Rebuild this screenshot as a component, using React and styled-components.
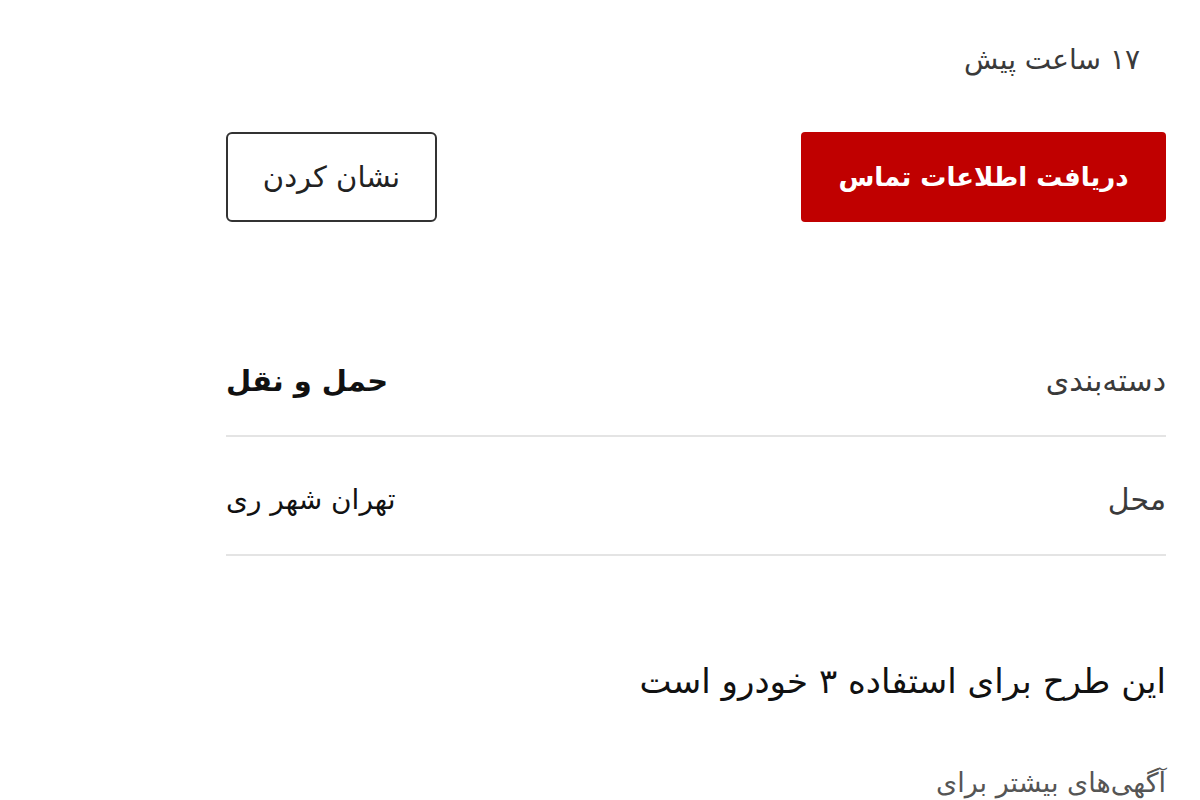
import React from 'react'
import styled, { createGlobalStyle } from 'styled-components'

const GlobalStyle = createGlobalStyle`
  html, body {
    margin: 0;
    padding: 0;
    background: #fff;
  }
  body {
    font-family: "DejaVu Sans", "Noto Sans", sans-serif;
    direction: rtl;
  }
`

const Page = styled.div`
  padding: 40px 34px 0 226px;
  height: 800px;
  box-sizing: border-box;
  overflow: hidden;
`

const TimeAgo = styled.div`
  font-size: 28px;
  line-height: 40px;
  color: #3a3a3a;
  padding-right: 26px;
  margin-bottom: 52px;
`

const Actions = styled.div`
  display: flex;
  justify-content: space-between;
  align-items: stretch;
  height: 90px;
  margin-bottom: 96px;
`

const Button = styled.button`
  font-family: inherit;
  font-size: ${p => (p.$primary ? '26px' : '29px')};
  height: 90px;
  border-radius: ${p => (p.$primary ? '4px' : '6px')};
  cursor: pointer;
  width: ${p => (p.$primary ? '365px' : '211px')};
  background: ${p => (p.$primary ? '#c00000' : '#fff')};
  color: ${p => (p.$primary ? '#fff' : '#222')};
  border: ${p => (p.$primary ? 'none' : '2px solid #333')};
  font-weight: ${p => (p.$primary ? 'bold' : 'normal')};
`

const InfoRow = styled.div`
  display: flex;
  justify-content: space-between;
  align-items: center;
  height: 119px;
  padding-top: 8px;
  box-sizing: border-box;
  border-bottom: 2px solid #e4e4e4;
`

const Label = styled.span`
  font-size: 30px;
  color: #3a3a3a;
`

const Value = styled.span`
  font-size: ${p => (p.$bold ? '29px' : '28px')};
  color: #111;
  font-weight: ${p => (p.$bold ? 'bold' : 'normal')};
`

const Title = styled.h2`
  margin: 103px 0 0;
  font-size: 34px;
  line-height: 44px;
  font-weight: normal;
  color: #111;
`

const MoreAds = styled.div`
  margin-top: 60px;
  font-size: 27px;
  line-height: 40px;
  color: #555;
`

const rows = [
  { label: 'دسته‌بندی', value: 'حمل و نقل', bold: true },
  { label: 'محل', value: 'تهران شهر ری', bold: false },
]

export default function App() {
  return (
    <>
      <GlobalStyle />
      <Page>
        <TimeAgo>۱۷ ساعت پیش</TimeAgo>
        <Actions>
          <Button $primary>دریافت اطلاعات تماس</Button>
          <Button>نشان کردن</Button>
        </Actions>
        {rows.map(row => (
          <InfoRow key={row.label}>
            <Label>{row.label}</Label>
            <Value $bold={row.bold}>{row.value}</Value>
          </InfoRow>
        ))}
        <Title>این طرح برای استفاده ۳ خودرو است</Title>
        <MoreAds>آگهی‌های بیشتر برای</MoreAds>
      </Page>
    </>
  )
}
